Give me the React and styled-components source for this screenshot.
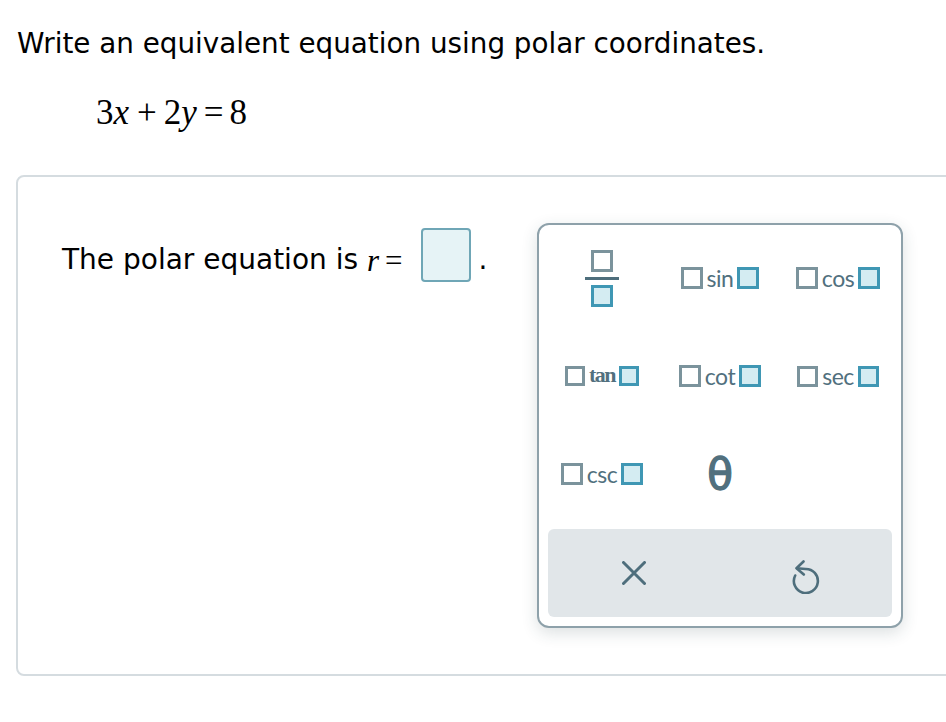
import React from "react";
import styled, { createGlobalStyle } from "styled-components";

const GlobalStyle = createGlobalStyle`
  html, body {
    margin: 0;
    padding: 0;
    background: #ffffff;
    overflow: hidden;
  }
  body {
    font-family: "DejaVu Sans", Verdana, sans-serif;
    color: #000000;
  }
`;

const Page = styled.div`
  padding: 27px 0 0 17px;
`;

const Prompt = styled.div`
  font-size: 27.8px;
  line-height: 34px;
`;

const Equation = styled.div`
  margin: 31px 0 0 79px;
  font-family: "Liberation Serif", "Times New Roman", serif;
  font-size: 35px;
  line-height: 41px;
`;

const Var = styled.i`
  font-family: "Liberation Serif", "Times New Roman", serif;
  font-style: italic;
  padding-right: ${({ pad }) => pad || 0}px;
`;

const Op = styled.span`
  font-family: "Liberation Serif", "Times New Roman", serif;
  padding: 0 ${({ pad }) => pad || 4}px;
`;

const Card = styled.div`
  margin: 42px -60px 0 -1px;
  height: 501px;
  box-sizing: border-box;
  border: 2px solid #d5dce0;
  border-radius: 8px;
  padding: 46px 0 46px 44px;
`;

const AnswerRow = styled.div`
  display: grid;
  grid-template-columns: 475px 366px;
  align-items: start;
`;

const AnswerLine = styled.div`
  display: flex;
  align-items: flex-start;
  margin-top: 5px;
  font-size: 28px;
  line-height: 34px;
`;

const AnswerText = styled.span`
  padding-top: 15px;
  white-space: nowrap;
`;

const MathText = styled.span`
  padding-top: 15px;
  font-size: 31px;
  white-space: nowrap;
`;

const InputBox = styled.span`
  display: block;
  box-sizing: border-box;
  width: 50px;
  height: 54px;
  margin-left: 12px;
  border: 2px solid #6fa6b6;
  border-radius: 4px;
  background: #e6f3f6;
`;

const Period = styled.span`
  padding: 15px 0 0 8px;
`;

const Panel = styled.div`
  box-sizing: border-box;
  width: 366px;
  height: 405px;
  border: 2px solid #8ea1aa;
  border-radius: 12px;
  background: #ffffff;
  padding: 4px 9px 9px;
  box-shadow: 0 5px 16px rgba(40, 60, 70, 0.16);
`;

const KeyGrid = styled.div`
  display: grid;
  grid-template-columns: repeat(3, 1fr);
  grid-auto-rows: 98px;
  margin: 0 -5px;
`;

const Key = styled.div`
  display: flex;
  align-items: center;
  justify-content: center;
  color: #51707e;
`;

const Slot = styled.span`
  display: block;
  box-sizing: border-box;
  width: ${({ size }) => size || 22}px;
  height: ${({ size }) => size || 22}px;
  border: 3px solid ${({ filled }) => (filled ? "#3f97b4" : "#7b939c")};
  background: ${({ filled }) => (filled ? "#d4ecf2" : "#ffffff")};
`;

const FuncGroup = styled.div`
  display: flex;
  align-items: center;
  gap: 4px;
`;

const FuncLabel = styled.span`
  font-family: ${({ serif }) =>
    serif ? `"Liberation Serif", "Times New Roman", serif` : `Lato, "Open Sans", sans-serif`};
  font-size: ${({ serif }) => (serif ? 22 : 23)}px;
  font-weight: ${({ serif }) => (serif ? 600 : 400)};
  letter-spacing: ${({ serif }) => (serif ? -1.6 : -0.5)}px;
  line-height: 22px;
  margin-top: ${({ serif }) => (serif ? -2 : -1)}px;
  color: #51707e;
`;

const Fraction = styled.div`
  display: flex;
  flex-direction: column;
  align-items: center;
  gap: 5px;
`;

const FracBar = styled.span`
  display: block;
  width: 34px;
  height: 3px;
  background: #4e6e7c;
`;

const Theta = styled.span`
  font-family: "DejaVu Sans", sans-serif;
  font-size: 42px;
  line-height: 42px;
  margin-top: 2px;
  color: #51707e;
  -webkit-text-stroke: 1.4px #51707e;
`;

const ActionBar = styled.div`
  display: grid;
  grid-template-columns: 1fr 1fr;
  height: 88px;
  margin-top: 6px;
  background: #e1e6e9;
  border-radius: 6px;
`;

const ActionButton = styled.div`
  display: flex;
  align-items: center;
  justify-content: center;
  color: #4e6e7c;
`;

const Func = ({ name, serif, left, right }) => (
  <FuncGroup>
    <Slot size={left} />
    <FuncLabel serif={serif}>{name}</FuncLabel>
    <Slot filled size={right} />
  </FuncGroup>
);

const CloseIcon = () => (
  <svg width="24" height="24" viewBox="0 0 24 24" fill="none">
    <path d="M1.5 1.5 L22.5 22.5 M22.5 1.5 L1.5 22.5" stroke="currentColor" strokeWidth="3" strokeLinecap="round" />
  </svg>
);

const UndoIcon = () => (
  <svg width="28" height="34" viewBox="0 0 28 34" fill="none" style={{ marginTop: 8 }}>
    <path
      d="M3.2 15.5 A12 12 0 1 0 13.5 9 L5 8.2"
      stroke="currentColor"
      strokeWidth="2.6"
      strokeLinecap="round"
      strokeLinejoin="round"
    />
    <path d="M11.5 1.5 L4.5 8.2 L11.8 14.5" stroke="currentColor" strokeWidth="2.6" strokeLinecap="round" strokeLinejoin="round" />
  </svg>
);

export default function App() {
  return (
    <>
      <GlobalStyle />
      <Page>
        <Prompt>Write an equivalent equation using polar coordinates.</Prompt>
        <Equation>
          3<Var pad={1}>x</Var>
          <Op pad={7}>+</Op>2<Var pad={1}>y</Var>
          <Op pad={6}>=</Op>8
        </Equation>
        <Card>
          <AnswerRow>
            <AnswerLine>
              <AnswerText>The polar equation is&nbsp;</AnswerText>
              <MathText>
                <Var>r</Var>
                <Op pad={6}>=</Op>
              </MathText>
              <InputBox />
              <Period>.</Period>
            </AnswerLine>
            <Panel>
              <KeyGrid>
                <Key>
                  <Fraction>
                    <Slot />
                    <FracBar />
                    <Slot filled />
                  </Fraction>
                </Key>
                <Key>
                  <Func name="sin" />
                </Key>
                <Key>
                  <Func name="cos" />
                </Key>
                <Key>
                  <Func name="tan" serif left={20} right={20} />
                </Key>
                <Key>
                  <Func name="cot" />
                </Key>
                <Key>
                  <Func name="sec" left={21} right={21} />
                </Key>
                <Key>
                  <Func name="csc" />
                </Key>
                <Key>
                  <Theta>θ</Theta>
                </Key>
                <Key />
              </KeyGrid>
              <ActionBar>
                <ActionButton>
                  <CloseIcon />
                </ActionButton>
                <ActionButton>
                  <UndoIcon />
                </ActionButton>
              </ActionBar>
            </Panel>
          </AnswerRow>
        </Card>
      </Page>
    </>
  );
}
